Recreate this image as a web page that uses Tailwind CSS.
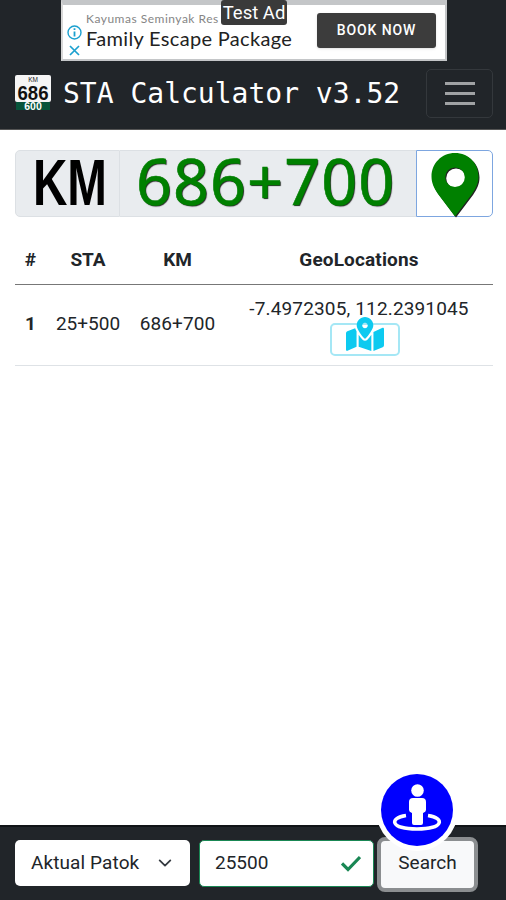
<!DOCTYPE html>
<html lang="en">
<head>
  <meta charset="UTF-8" />
  <title>STA Calculator v3.52</title>
  <script src="https://cdn.jsdelivr.net/npm/@tailwindcss/browser@4"></script>
</head>

<body class="bg-white h-[900px] flex flex-col overflow-hidden font-['Roboto',sans-serif] text-[19px] text-[#212529]">

  <!-- Navbar with ad banner -->
  <header class="bg-[#212529] h-[130px] shrink-0 border-b border-[#555]">
    <div class="relative ml-[61px] w-[386px] h-[61px] bg-white border-2 border-t-[5px] border-[#c4c6c8] border-l-[#d8d8d8] flex items-center">
      <div class="w-[22px] flex flex-col items-center gap-[5px] pt-[16px] pl-[1px] text-[#1ba0cf]">
        <svg class="w-[15px] h-[15px]" viewBox="0 0 15 15" fill="none" stroke="currentColor" stroke-width="1.4">
          <circle cx="7.5" cy="7.5" r="6.5" />
          <path d="M7.5 6.5v5M7.5 3.3v1.8" stroke-width="1.8" />
        </svg>
        <svg class="w-[11px] h-[11px]" viewBox="0 0 11 11" fill="none" stroke="currentColor" stroke-width="1.7">
          <path d="M1 1l9 9M10 1l-9 9" />
        </svg>
      </div>
      <div class="w-[232px] whitespace-nowrap font-['Lato',sans-serif] -mt-[4px] pl-[1px]">
        <div class="text-[12px] leading-[16px] text-[#858585] tracking-[0.5px]">Kayumas Seminyak Res</div>
        <div class="text-[20px] leading-[23px] text-[#222] tracking-[0.33px]">Family Escape Package</div>
      </div>
      <button class="w-[119px] h-[35px] -mt-[3px] rounded-[3px] bg-[#3c3c3c] text-white font-medium text-[14px] tracking-[0.9px] shadow">BOOK NOW</button>
      <div class="absolute left-[158px] -top-[5px] w-[66px] h-[25px] rounded-[3px] bg-[#3a3a3a] text-white text-[18.5px] leading-[27px] text-center whitespace-nowrap">Test Ad</div>
    </div>
    <nav class="flex items-center h-[66px] pl-[15px] pr-[13px]">
      <svg class="w-[36px] h-[37px] -mt-[3px]" viewBox="0 0 36 37">
        <rect x="0" y="1" width="36" height="27" rx="2" fill="#f5f5f5" />
        <rect x="1" y="28" width="34" height="8" fill="#07543a" />
        <text x="18" y="8" text-anchor="middle" font-family="Liberation Sans" font-size="6.500" fill="#222">KM</text>
        <text x="18" y="25.500" text-anchor="middle" font-family="Liberation Sans" font-weight="bold" font-size="20" textLength="31" lengthAdjust="spacingAndGlyphs" fill="#111">686</text>
        <text x="18" y="36" text-anchor="middle" font-family="Liberation Sans" font-weight="bold" font-size="10.500" fill="#fff">600</text>
      </svg>
      <h1 class="ml-[12px] font-['DejaVu_Sans_Mono',monospace] text-[28px] text-white whitespace-nowrap">STA Calculator v3.52</h1>
      <button class="ml-auto w-[67px] h-[49px] -mt-[2px] rounded-[5px] border border-[#34383c] flex flex-col items-center justify-center gap-[7px]">
        <span class="w-[30px] h-[3px] bg-[#a0a2a4]"></span>
        <span class="w-[30px] h-[3px] bg-[#a0a2a4]"></span>
        <span class="w-[30px] h-[3px] bg-[#a0a2a4]"></span>
      </button>
    </nav>
  </header>

  <main class="flex-1 pl-[15px] pr-[13px] pt-[20px]">
    <!-- Result -->
    <div class="flex h-[67px] whitespace-nowrap">
      <div class="w-[105px] bg-[#e9ecef] border border-[#dce0e4] rounded-l-[5px]">
        <svg class="w-[103px] h-[65px]" viewBox="0 0 103 65">
          <text x="17" y="54" font-family="Liberation Sans" font-weight="bold" font-size="65" textLength="74" lengthAdjust="spacingAndGlyphs" fill="#000">KM</text>
        </svg>
      </div>
      <div class="w-[296px] bg-[#e9ecef] border-y border-[#dce0e4] pl-[16px] font-['Noto_Sans',sans-serif] text-[63px] leading-[60px] tracking-[1px] text-[#008000] [text-shadow:1px_1px_1px_#222] [-webkit-text-stroke:0.6px_#008000]">686+700</div>
      <button class="w-[77px] border border-[#7da6e0] rounded-r-[5px] flex justify-center">
        <svg class="w-[50px] h-[65px] mt-[1px] [filter:drop-shadow(1px_1px_0px_#222)]" viewBox="0 0 50 65">
          <path fill="#008000" fill-rule="evenodd" d="M25 1C11.500 1 1.500 11.500 1.500 24.500C1.500 31 4 36 8 42L25 64.500L42 42C46 36 48.500 31 48.500 24.500C48.500 11.500 38.500 1 25 1ZM25 15.500a9.800 9.800 0 1 1 0 19.600a9.800 9.800 0 1 1 0-19.600Z" />
        </svg>
      </button>
    </div>

    <!-- Locations table -->
    <table class="mt-[17px] w-full table-fixed text-center">
      <thead>
        <tr class="h-[50px] border-b border-[#777]">
          <th class="w-[31px] pt-[3px]">#</th>
          <th class="w-[84px] pt-[3px]">STA</th>
          <th class="w-[95px] pt-[3px]">KM</th>
          <th class="pt-[3px] tracking-[0.15px]">GeoLocations</th>
        </tr>
      </thead>
      <tbody>
        <tr class="h-[81px] border-b border-[#dee2e6]">
          <th>1</th>
          <td>25+500</td>
          <td class="tracking-[0.1px]">686+700</td>
          <td>
            <div class="leading-[28px] mt-[1px] tracking-[0.15px]">-7.4972305, 112.2391045</div>
            <button class="ml-[105px] w-[70px] h-[33px] border-2 border-[#a5e7f5] rounded-[5px] flex justify-center text-[#0dcaf0]">
              <svg class="w-[38px] h-[34px] mt-[-8px]" viewBox="0 0 576 512" fill="currentColor">
                <path d="M288 0c-69.590 0-126 56.410-126 126 0 56.260 82.350 158.800 113.900 196.020 6.390 7.540 17.820 7.540 24.200 0C331.650 284.800 414 182.260 414 126 414 56.410 357.590 0 288 0zm0 168c-23.200 0-42-18.800-42-42s18.800-42 42-42 42 18.800 42 42-18.800 42-42 42zM20.120 215.950A32.006 32.006 0 0 0 0 245.660v250.320c0 11.320 11.430 19.060 21.940 14.860L160 448V214.920c-8.840-15.980-16.070-31.540-21.250-46.420L20.120 215.950zM288 359.670c-14.070 0-27.380-6.180-36.510-16.960-19.660-23.200-40.570-49.620-59.490-76.720v182l192 64V266c-18.920 27.090-39.820 53.520-59.490 76.720-9.130 10.770-22.440 16.950-36.510 16.950zm266.060-198.510L416 224v288l139.880-55.950A31.996 31.996 0 0 0 576 426.340V176.020c0-11.320-11.430-19.060-21.940-14.860z" />
              </svg>
            </button>
          </td>
        </tr>
      </tbody>
    </table>
  </main>

  <!-- Search bar -->
  <footer class="relative bg-[#212529] h-[75px] shrink-0 border-t-2 border-[#111417] flex items-start gap-[9px] pt-[13px] pl-[15px]">
    <div class="w-[175px] h-[46px] bg-white rounded-[5px] flex items-center justify-between pl-[16px] pr-[18px]">
      <span class="tracking-[0.1px]">Aktual Patok</span>
      <svg class="w-[14px] h-[8px]" viewBox="0 0 15 9" fill="none" stroke="#343a40" stroke-width="2" stroke-linecap="round" stroke-linejoin="round">
        <path d="M1.500 1.500l6 6l6-6" />
      </svg>
    </div>
    <div class="w-[175px] h-[47px] bg-white rounded-[5px] border border-[#198754] flex items-center justify-between pl-[15px] pr-[12px] pb-[1px]">
      <span>25500</span>
      <svg class="w-[20px] h-[17px] mt-[1px]" viewBox="0 0 20 17" fill="none" stroke="#198754" stroke-width="3.200">
        <path d="M1 8.500l6 6L19 2" />
      </svg>
    </div>
    <button class="-ml-[6px] -mt-[3px] w-[101px] h-[55px] bg-[#f8f9fa] rounded-[8px] border-[4px] border-[#8b8e90] pb-[2px]">Search</button>

    <div class="absolute left-[376px] -top-[58px] w-[82px] h-[82px] rounded-full bg-white p-[5px]">
      <svg class="w-[72px] h-[72px] rounded-full bg-[#0000ff]" viewBox="0 0 72 72">
        <path d="M25 41.500C8 44 9 55 36 55S64 44 47 41.500" fill="none" stroke="#fff" stroke-width="3.500" />
        <circle cx="36.500" cy="16.500" r="6.300" fill="#fff" />
        <path d="M32 24h9q4 0 4 4v8q0 2-3 3v10q0 2-2 2h-7q-2 0-2-2V39q-3-1-3-3v-8q0-4 4-4z" fill="#fff" />
      </svg>
    </div>
  </footer>

</body>
</html>
